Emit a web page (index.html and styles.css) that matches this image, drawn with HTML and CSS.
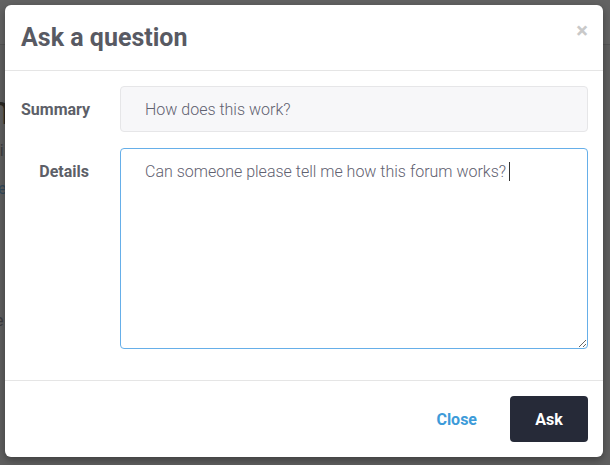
FILE: index.html
```html
<!DOCTYPE html>
<html>
<head>
<meta charset="utf-8">
<link rel="stylesheet" href="styles.css">
</head>
<body>
<div class="backdrop">
  <div class="page-bar"></div>
  <div class="page-text">
    <span class="frag big">n</span>
    <span class="frag small">hi</span>
    <span class="frag link">le</span>
    <span class="frag small low">e</span>
  </div>
</div>
<div class="modal">
  <div class="modal-header">
    <h1 class="modal-title">Ask a question</h1>
    <span class="close-x">×</span>
  </div>
  <div class="modal-body">
    <div class="form-row">
      <label class="form-label">Summary</label>
      <input class="input summary" type="text" value="How does this work?">
    </div>
    <div class="form-row">
      <label class="form-label">Details</label>
      <div class="area-wrap">
        <textarea class="input details">Can someone please tell me how this forum works?</textarea>
        <span class="caret"></span>
      </div>
    </div>
  </div>
  <div class="modal-footer">
    <button class="btn-link">Close</button>
    <button class="btn-primary">Ask</button>
  </div>
</div>
</body>
</html>
```

FILE: styles.css
```css
html, body {
  margin: 0;
  padding: 0;
  width: 610px;
  height: 465px;
  overflow: hidden;
  background: #5f5f5f;
  font-family: Roboto, "Liberation Sans", sans-serif;
}
.backdrop {
  position: absolute;
  inset: 0;
  z-index: 0;
}
.page-bar {
  height: 44px;
  border-bottom: 1px solid #555;
  background: #636363;
}
.page-text {
  position: relative;
}
.frag {
  position: absolute;
  color: #3a3a3a;
  font-family: Roboto, sans-serif;
}
.frag.big { left: -12px; top: 42px; font-size: 40px; color: #2a2722; }
.frag.small { left: -9px; top: 96px; font-size: 16px; color: #3c3c40; }
.frag.link { left: -6px; top: 134px; font-size: 16px; color: #344a5c; }
.frag.low { left: -5px; top: 266px; color: #3c3c40; }

.modal {
  position: relative;
  z-index: 1;
  margin: 5px 0 0 5px;
  width: 598px;
  height: 452px;
  background: #fff;
  border-radius: 6px;
  box-shadow: 0 3px 9px rgba(0,0,0,0.35);
  display: flex;
  flex-direction: column;
  box-sizing: border-box;
}
.modal-header {
  height: 65px;
  border-bottom: 1px solid #e5e5e5;
  display: flex;
  align-items: center;
  justify-content: space-between;
  padding: 0 15px 0 16px;
  flex: none;
}
.modal-title {
  margin: 0;
  font-size: 25px;
  font-weight: 700;
  color: #585a63;
  letter-spacing: 0;
}
.close-x {
  font-size: 22px;
  font-weight: 700;
  color: #c9c9c9;
  line-height: 1;
  margin-top: -14px;
}
.modal-body {
  padding: 15px 15px 31px 16px;
  display: flex;
  flex-direction: column;
  gap: 16px;
  flex: none;
}
.form-row {
  display: grid;
  grid-template-columns: 68px 468px;
  column-gap: 31px;
  align-items: start;
}
.form-label {
  text-align: right;
  font-size: 16px;
  font-weight: 700;
  color: #5d5f68;
  padding-top: 14px;
  line-height: 20px;
}
.input {
  box-sizing: border-box;
  width: 468px;
  font-family: Roboto, "Liberation Sans", sans-serif;
  font-size: 16px;
  font-weight: 300;
  color: #5f6170;
  padding: 0 24px;
  border-radius: 4px;
  outline: none;
  margin: 0;
}
.summary {
  height: 46px;
  background: #f7f7f9;
  border: 1px solid #e6e6e8;
}
.area-wrap {
  position: relative;
  height: 201px;
}
.details {
  display: block;
  height: 201px;
  border: 1px solid #66afe9;
  background: #fff;
  padding-top: 12px;
  line-height: 22px;
  resize: vertical;
}
.caret {
  position: absolute;
  left: 389px;
  top: 14px;
  width: 1px;
  height: 19px;
  background: #333;
}
.modal-footer {
  flex: 1;
  border-top: 1px solid #e5e5e5;
  display: flex;
  justify-content: flex-end;
  align-items: flex-start;
  padding: 15px 15px 0 0;
  gap: 33px;
}
.btn-link {
  background: none;
  border: none;
  padding: 0;
  height: 46px;
  font-family: Roboto, "Liberation Sans", sans-serif;
  font-size: 16px;
  font-weight: 700;
  color: #3d9bd9;
}
.btn-primary {
  width: 78px;
  height: 46px;
  background: #262a38;
  border: none;
  border-radius: 4px;
  color: #fff;
  font-family: Roboto, "Liberation Sans", sans-serif;
  font-size: 16px;
  font-weight: 700;
}
```
